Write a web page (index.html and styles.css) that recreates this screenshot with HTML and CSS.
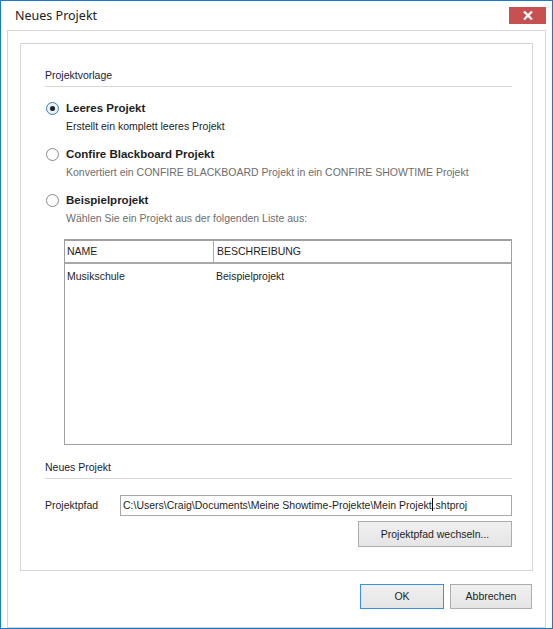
FILE: index.html
```html
<!DOCTYPE html>
<html>
<head>
  <title>Neues Projekt</title>
  <link rel="stylesheet" href="styles.css">
</head>
<body>

<div class="window">
  <div class="titlebar">
    <span class="title">Neues Projekt</span>
    <button class="close">
      <svg width="10" height="9" viewBox="0 0 10 9"><path d="M1 0.5 L9 8.5 M9 0.5 L1 8.5" stroke="#fff" stroke-width="2.2"/></svg>
    </button>
  </div>

  <div class="frame">
    <div class="panel">
      <div class="section">Projektvorlage</div>

      <div class="option">
        <span class="radio checked"></span>
        <div>
          <div class="opt-title">Leeres Projekt</div>
          <div class="opt-desc">Erstellt ein komplett leeres Projekt</div>
        </div>
      </div>

      <div class="option">
        <span class="radio"></span>
        <div>
          <div class="opt-title">Confire Blackboard Projekt</div>
          <div class="opt-desc muted">Konvertiert ein CONFIRE BLACKBOARD Projekt in ein CONFIRE SHOWTIME Projekt</div>
        </div>
      </div>

      <div class="option">
        <span class="radio"></span>
        <div>
          <div class="opt-title">Beispielprojekt</div>
          <div class="opt-desc muted">Wählen Sie ein Projekt aus der folgenden Liste aus:</div>
        </div>
      </div>

      <div class="list">
        <div class="list-head">
          <div class="col-name">NAME</div>
          <div class="col-desc">BESCHREIBUNG</div>
        </div>
        <div class="list-row">
          <div class="col-name">Musikschule</div>
          <div class="col-desc">Beispielprojekt</div>
        </div>
      </div>

      <div class="section second">Neues Projekt</div>

      <div class="path-row">
        <span class="path-label">Projektpfad</span>
        <div class="textbox">C:\Users\Craig\Documents\Meine Showtime-Projekte\Mein Projekt<span class="caret"></span>.shtproj</div>
      </div>
      <div class="path-actions">
        <button class="btn wide">Projektpfad wechseln...</button>
      </div>
    </div>

    <div class="footer">
      <button class="btn default">OK</button>
      <button class="btn">Abbrechen</button>
    </div>
  </div>
</div>

</body>
</html>
```

FILE: styles.css
```css
body { margin: 0; background: #fff; font-family: "Liberation Sans", Arial, sans-serif; font-size: 10.5px; color: #1e1e1e; }

.window { width: 551px; height: 627px; border: 1px solid #1979ca; background: #fff; display: flex; flex-direction: column; }

.titlebar { height: 29px; display: flex; align-items: flex-start; justify-content: space-between; }
.title { font-family: "Noto Sans", sans-serif; font-size: 12.5px; color: #222; margin: 6px 0 0 14px; }
.close { width: 37px; height: 17px; margin: 6px 6px 0 0; border: none; padding: 0; background: #c75050; display: flex; align-items: center; justify-content: center; }

.frame { margin: 0 6px; height: 590px; border: 1px solid #d6d6d6; padding: 12px 12px 0; display: flex; flex-direction: column; }

.panel { height: 526px; border: 1px solid #d6d6d6; padding: 0 20px 0 24px; }

.section { margin-top: 25px; padding-bottom: 4px; line-height: 13px; border-bottom: 1px solid #d6d6d6; color: #1a1a3a; }
.section.second { margin-top: 16px; }

.option { display: flex; gap: 7px; margin-top: 15px; }
.option + .option { margin-top: 15px; }
.opt-title { font-weight: bold; font-size: 11.5px; line-height: 14px; margin-top: -1px; color: #1e1e1e; }
.opt-desc { line-height: 14px; margin-top: 4px; color: #222; }
.opt-desc.muted { color: #6d6d6d; }

.radio { width: 11px; height: 11px; border: 1px solid #8a8a8a; border-radius: 50%; background: #fff; display: flex; align-items: center; justify-content: center; flex: none; margin-left: 1px; }
.radio.checked { border-color: #3c7fb1; background: #e6f0fa; }
.radio.checked::after { content: ""; width: 5px; height: 5px; border-radius: 50%; background: #1f1f1f; }

.list { margin: 14px 0 0 19px; height: 203px; border: 1px solid #a0a0a0; border-top-width: 2px; }
.list-head, .list-row { display: flex; }
.list-head { line-height: 21px; border-bottom: 2px solid #a8a8a8; }
.list-head .col-name { border-right: 1px solid #a8a8a8; }
.list-row { line-height: 24px; }
.col-name { width: 146px; padding-left: 2px; }
.col-desc { padding-left: 3px; }

.path-row { display: flex; align-items: center; margin-top: 16px; }
.path-label { width: 75px; }
.textbox { flex: 1; height: 19px; border: 1px solid #a8a8a8; line-height: 19px; padding-left: 2px; color: #1e1e1e; white-space: nowrap; }
.caret { display: inline-block; width: 1px; height: 13px; background: #000; vertical-align: -2px; }

.path-actions { display: flex; justify-content: flex-end; margin-top: 5px; }

.btn { font-family: "Liberation Sans", Arial, sans-serif; font-size: 10.5px; color: #1e1e1e; height: 25px; width: 82px; border: 1px solid #adadad; background: linear-gradient(#f0f0f0, #e5e5e5); padding: 0; }
.btn.wide { width: 154px; height: 26px; }
.btn.default { width: 84px; border-color: #3c8fe6; }

.footer { display: flex; justify-content: flex-end; gap: 6px; margin-top: 13px; padding-right: 1px; }
```
